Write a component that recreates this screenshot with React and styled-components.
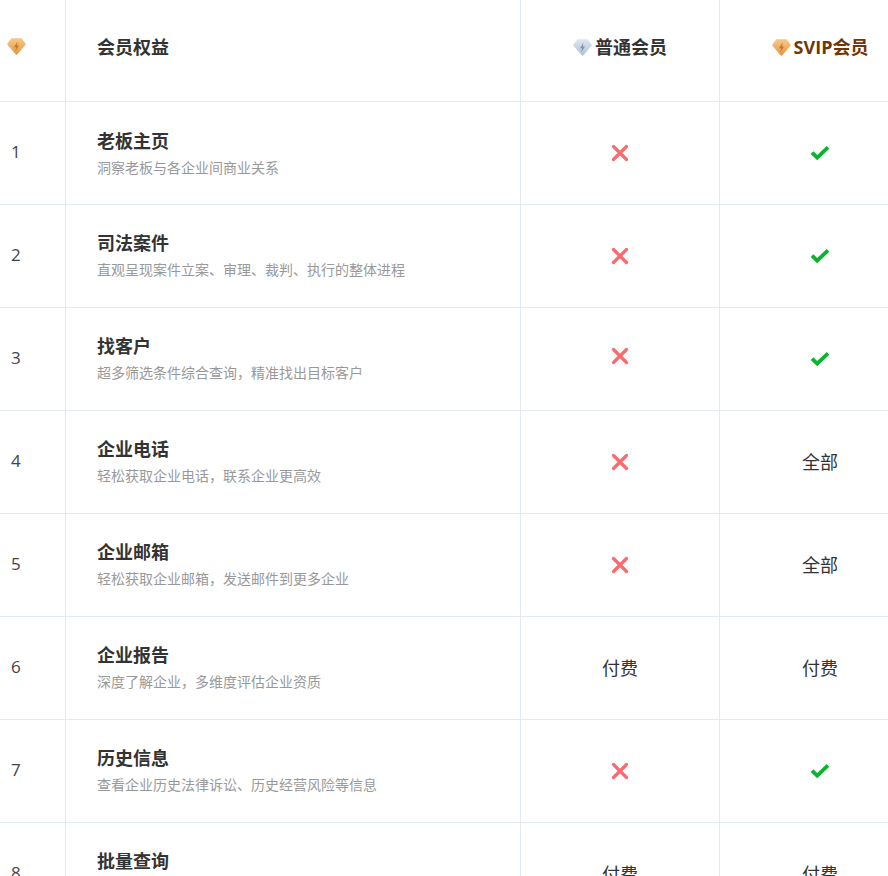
import React from "react";
import styled, { createGlobalStyle } from "styled-components";

const rows = [
  { id: 1, title: "老板主页", desc: "洞察老板与各企业间商业关系", basic: "no", svip: "yes" },
  { id: 2, title: "司法案件", desc: "直观呈现案件立案、审理、裁判、执行的整体进程", basic: "no", svip: "yes" },
  { id: 3, title: "找客户", desc: "超多筛选条件综合查询，精准找出目标客户", basic: "no", svip: "yes", lift: true },
  { id: 4, title: "企业电话", desc: "轻松获取企业电话，联系企业更高效", basic: "no", svip: "全部" },
  { id: 5, title: "企业邮箱", desc: "轻松获取企业邮箱，发送邮件到更多企业", basic: "no", svip: "全部" },
  { id: 6, title: "企业报告", desc: "深度了解企业，多维度评估企业资质", basic: "付费", svip: "付费" },
  { id: 7, title: "历史信息", desc: "查看企业历史法律诉讼、历史经营风险等信息", basic: "no", svip: "yes" },
  { id: 8, title: "批量查询", desc: "\u00a0", basic: "付费", svip: "付费" },
];

const GlobalStyle = createGlobalStyle`
  html, body {
    margin: 0;
    padding: 0;
    background: #fff;
    overflow: hidden;
  }
  body {
    font-family: "Open Sans", "Noto Sans CJK SC", sans-serif;
    color: #333;
  }
`;

const Page = styled.div`
  width: 888px;
  height: 876px;
  overflow: hidden;
`;

const Table = styled.div`
  width: 920px;
`;

const Row = styled.div`
  display: grid;
  grid-template-columns: 66px 455px 199px 200px;
  height: ${(p) => (p.$header ? "102px" : "103px")};
  box-sizing: border-box;
  border-bottom: 1px solid #e3ebf0;
`;

const Cell = styled.div`
  display: flex;
  align-items: center;
  justify-content: center;
  box-sizing: border-box;
  font-size: 18px;
  line-height: 24px;
  color: #333;
  border-right: 1px solid #e3ebf0;
  &:last-child {
    border-right: none;
  }
`;

const IndexCell = styled(Cell)`
  justify-content: flex-start;
  padding-left: 11px;
  padding-bottom: 2px;
  font-size: 17px;
  color: #444;
`;

const HeadIconCell = styled(Cell)`
  justify-content: flex-start;
  padding-left: 7px;
  padding-bottom: 8px;
`;

const NameCell = styled(Cell)`
  flex-direction: column;
  align-items: flex-start;
  padding-left: 31px;
  padding-bottom: ${(p) => (p.$first ? "0" : "2px")};
`;

const HeadName = styled(Cell)`
  justify-content: flex-start;
  padding-left: 31px;
  padding-bottom: 7px;
  font-weight: 700;
`;

const PlanCell = styled(Cell)`
  padding-bottom: 7px;
  gap: 3px;
  font-weight: 700;
  color: ${(p) => p.$color || "#333"};
`;

const Title = styled.div`
  font-size: 18px;
  font-weight: 700;
  line-height: 26px;
  color: #333;
`;

const Desc = styled.div`
  font-size: 14px;
  line-height: 20px;
  margin-top: 4px;
  color: #999;
`;

const Mark = styled.svg`
  display: block;
  width: 20px;
  height: 20px;
`;

const Lift = styled.div`
  display: flex;
  margin-bottom: ${(p) => (p.$on ? "6px" : "0")};
`;

const Diamond = ({ id, top, bottom, bolt }) => (
  <svg width="19" height="17" viewBox="0 0 18 16">
    <defs>
      <linearGradient id={id} x1="0" y1="0" x2="0" y2="1">
        <stop offset="0" stopColor={top} />
        <stop offset="1" stopColor={bottom} />
      </linearGradient>
    </defs>
    <path
      d="M4.6 1h8.8L17 5.8 9 15 1 5.8z"
      fill={`url(#${id})`}
      stroke={`url(#${id})`}
      strokeWidth="1.6"
      strokeLinejoin="round"
    />
    <path d="M10 3.2L6.6 8.6h2L7.9 12.6l3.5-5.6H9.3z" fill={bolt} />
  </svg>
);

const Cross = () => (
  <Mark viewBox="0 0 20 20">
    <path
      d="M3.5 3.5l13 13M16.5 3.5l-13 13"
      stroke="#fb6a6f"
      strokeWidth="3.2"
      strokeLinecap="round"
      fill="none"
    />
  </Mark>
);

const Check = () => (
  <Mark viewBox="0 0 20 20">
    <path d="M2 9.6l5.2 5L18 4.4" stroke="#0bb32f" strokeWidth="3.8" fill="none" />
  </Mark>
);

export default function App() {
  return (
    <Page>
      <GlobalStyle />
      <Table>
        <Row $header>
          <HeadIconCell>
            <Diamond id="gold-a" top="#f7c684" bottom="#e09a45" bolt="#bd7a30" />
          </HeadIconCell>
          <HeadName>会员权益</HeadName>
          <PlanCell>
            <Diamond id="silver" top="#dbe5ef" bottom="#b3c4d9" bolt="#7f95ae" />
            普通会员
          </PlanCell>
          <PlanCell $color="#6f3606">
            <Diamond id="gold-b" top="#f7c684" bottom="#e09a45" bolt="#bd7a30" />
            SVIP会员
          </PlanCell>
        </Row>
        {rows.map((r) => (
          <Row key={r.id}>
            <IndexCell>{r.id}</IndexCell>
            <NameCell $first={r.id === 1}>
              <Title>{r.title}</Title>
              <Desc>{r.desc}</Desc>
            </NameCell>
            <Cell>
              <Lift $on={r.lift}>{r.basic === "no" ? <Cross /> : r.basic}</Lift>
            </Cell>
            <Cell>{r.svip === "yes" ? <Check /> : r.svip}</Cell>
          </Row>
        ))}
      </Table>
    </Page>
  );
}
